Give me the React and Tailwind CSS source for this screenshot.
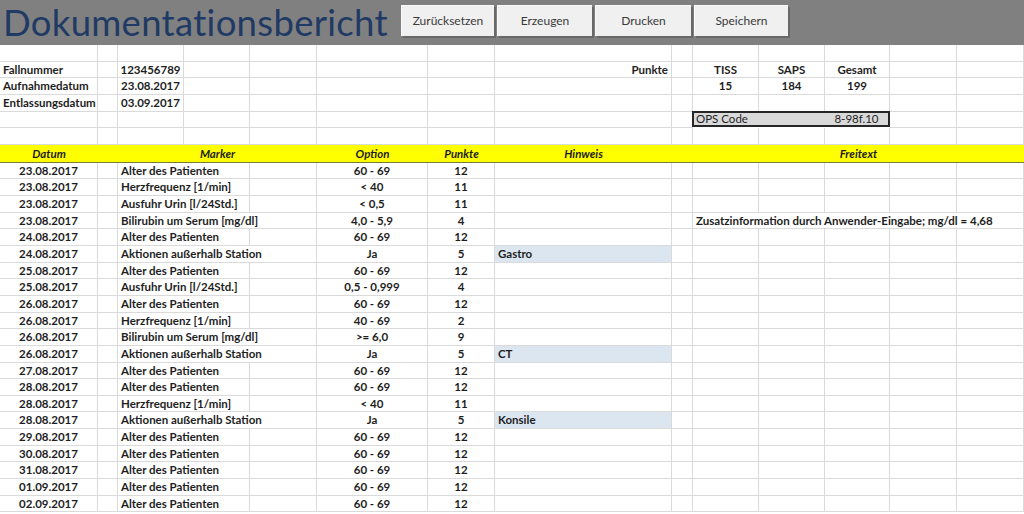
import clsx from 'clsx'

const COLS =
  'grid grid-cols-[98px_20px_66px_66px_67px_111px_67px_177px_21px_66px_66px_65px_67px_67px]'

const LINE = 'border-r border-b border-[#dadada]'

const rows = [
  ['23.08.2017', 'Alter des Patienten', '60 - 69', '12'],
  ['23.08.2017', 'Herzfrequenz [1/min]', '< 40', '11'],
  ['23.08.2017', 'Ausfuhr Urin [l/24Std.]', '< 0,5', '11'],
  ['23.08.2017', 'Bilirubin um Serum [mg/dl]', '4,0 - 5,9', '4', '', 'Zusatzinformation durch Anwender-Eingabe; mg/dl = 4,68'],
  ['24.08.2017', 'Alter des Patienten', '60 - 69', '12'],
  ['24.08.2017', 'Aktionen außerhalb Station', 'Ja', '5', 'Gastro'],
  ['25.08.2017', 'Alter des Patienten', '60 - 69', '12'],
  ['25.08.2017', 'Ausfuhr Urin [l/24Std.]', '0,5 - 0,999', '4'],
  ['26.08.2017', 'Alter des Patienten', '60 - 69', '12'],
  ['26.08.2017', 'Herzfrequenz [1/min]', '40 - 69', '2'],
  ['26.08.2017', 'Bilirubin um Serum [mg/dl]', '>= 6,0', '9'],
  ['26.08.2017', 'Aktionen außerhalb Station', 'Ja', '5', 'CT'],
  ['27.08.2017', 'Alter des Patienten', '60 - 69', '12'],
  ['28.08.2017', 'Alter des Patienten', '60 - 69', '12'],
  ['28.08.2017', 'Herzfrequenz [1/min]', '< 40', '11'],
  ['28.08.2017', 'Aktionen außerhalb Station', 'Ja', '5', 'Konsile'],
  ['29.08.2017', 'Alter des Patienten', '60 - 69', '12'],
  ['30.08.2017', 'Alter des Patienten', '60 - 69', '12'],
  ['31.08.2017', 'Alter des Patienten', '60 - 69', '12'],
  ['01.09.2017', 'Alter des Patienten', '60 - 69', '12'],
  ['02.09.2017', 'Alter des Patienten', '60 - 69', '12'],
]

// top block: 14 cells per row, [text, align]
const top = [
  [],
  [['Fallnummer', 'l'], null, ['123456789', 'c'], null, null, null, null, ['Punkte', 'r'], null, ['TISS', 'c'], ['SAPS', 'c'], ['Gesamt', 'c']],
  [['Aufnahmedatum', 'l'], null, ['23.08.2017', 'c'], null, null, null, null, null, null, ['15', 'c'], ['184', 'c'], ['199', 'c']],
  [['Entlassungsdatum', 'l'], null, ['03.09.2017', 'c']],
]

function Cell({ children, align = 'l', className }) {
  return (
    <div
      className={clsx(
        LINE,
        'h-[16.65px] leading-[16px] whitespace-nowrap',
        align === 'c' && 'text-center',
        align === 'r' && 'text-right pr-[3px]',
        align === 'l' && 'pl-[3px]',
        className
      )}
    >
      {children}
    </div>
  )
}

function Overflow({ children }) {
  return (
    <span className="relative z-10 inline-block h-full bg-white pr-[2px]">{children}</span>
  )
}

function TopRow({ cells }) {
  return (
    <div className={COLS}>
      {Array.from({ length: 14 }).map((_, i) => {
        const c = cells[i]
        return (
          <Cell key={i} align={c ? c[1] : 'l'}>
            {c ? c[0] : ''}
          </Cell>
        )
      })}
    </div>
  )
}

function DataRow({ r }) {
  const [date, marker, option, pts, hint, free] = r
  return (
    <div className={COLS}>
      <Cell align="c">{date}</Cell>
      <Cell />
      <Cell className="col-span-2 pl-[2px]">
        <Overflow>{marker}</Overflow>
      </Cell>
      <Cell />
      <Cell align="c">{option}</Cell>
      <Cell align="c">{pts}</Cell>
      <Cell className={clsx(hint && 'bg-[#dce6f1] pl-[2px]')}>{hint}</Cell>
      <Cell />
      <Cell className="pl-[2px]">{free && <Overflow>{free}</Overflow>}</Cell>
      <Cell />
      <Cell />
      <Cell />
      <Cell />
    </div>
  )
}

export default function App() {
  return (
    <div className="w-[1024px] h-[514px] overflow-hidden bg-white text-[#1e1e1e] font-['Lato','Open_Sans',sans-serif] text-[11.5px] font-bold">
      <div className="h-[45px] bg-[#808080] flex items-start">
        <div className="w-[401px] pl-[3px] h-full flex items-center">
          <h1 className="text-[36.5px] leading-none font-normal text-[#1f3a64] tracking-[0.3px]">
            Dokumentationsbericht
          </h1>
        </div>
        <div className="flex gap-[3px] mt-[5px]">
          {[
            ['Zurücksetzen', 'w-[93px]'],
            ['Erzeugen', 'w-[95px]'],
            ['Drucken', 'w-[96px]'],
            ['Speichern', 'w-[94px]'],
          ].map(([t, w]) => (
            <button
              key={t}
              className={clsx(
                w,
                'h-[31px] bg-[#f0f0f0] text-[#3a3a3a] font-normal text-[12px] shadow-[2px_2px_0_#686868] border-t border-l border-[#fafafa]'
              )}
            >
              {t}
            </button>
          ))}
        </div>
      </div>

      {top.map((cells, i) => (
        <TopRow key={i} cells={cells} />
      ))}

      <div className={COLS}>
        {Array.from({ length: 9 }).map((_, i) => (
          <Cell key={i} />
        ))}
        <div className="col-span-3 h-[16.65px] -mt-px -ml-px border-2 border-[#262626] bg-[#d9d9d9] flex items-center font-normal">
          <span className="flex-1 pl-[2px]">OPS Code</span>
          <span className="w-[63px] text-center">8-98f.10</span>
        </div>
        <Cell />
        <Cell />
      </div>
      <TopRow cells={[]} />

      <div className={clsx(COLS, 'h-[18px] bg-[#ffff00] border-b border-[#7a7a3a] italic leading-[17px]')}>
        <div className="text-center">Datum</div>
        <div />
        <div className="col-span-3 text-center">Marker</div>
        <div className="text-center">Option</div>
        <div className="text-center">Punkte</div>
        <div className="text-center">Hinweis</div>
        <div />
        <div className="col-span-5 text-center">Freitext</div>
      </div>

      {rows.map((r, i) => (
        <DataRow key={i} r={r} />
      ))}
    </div>
  )
}
